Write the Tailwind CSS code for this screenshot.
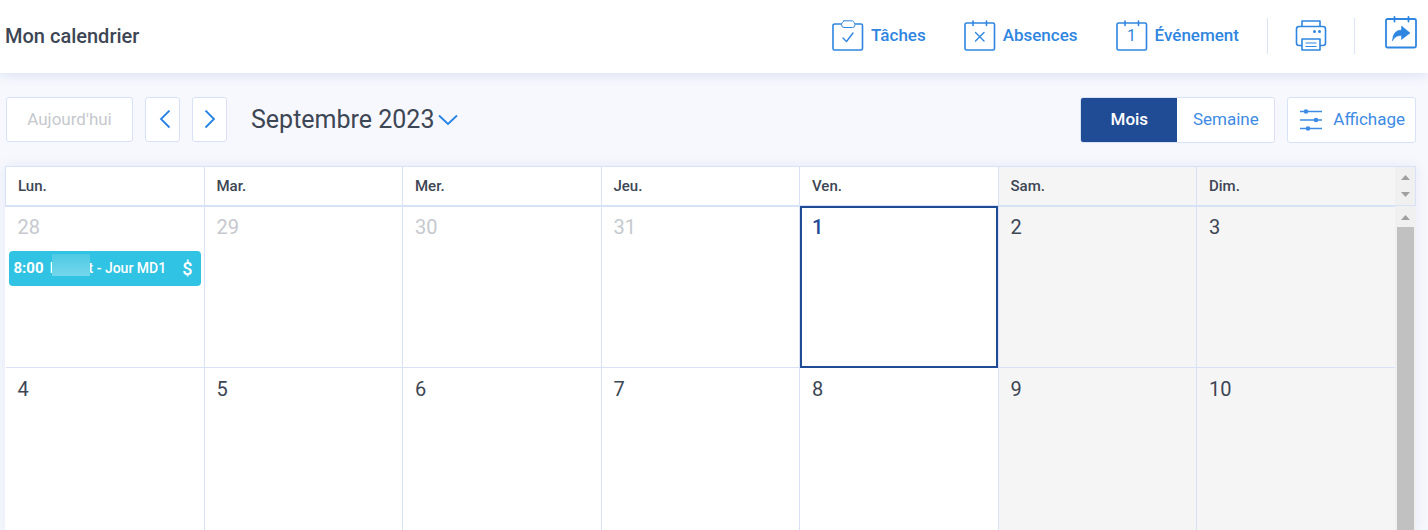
<!DOCTYPE html>
<html lang="fr">
<head>
  <meta charset="UTF-8" />
  <meta name="viewport" content="width=device-width, initial-scale=1.0" />
  <title>Mon calendrier</title>
  <script src="https://cdn.jsdelivr.net/npm/@tailwindcss/browser@4"></script>
</head>
<body class="h-screen overflow-hidden flex flex-col bg-[#f7f8fd] font-['Roboto',sans-serif] text-[#3d4654]">

  <!-- Top bar -->
  <header class="flex items-center justify-between h-[73px] shrink-0 pl-[5px] pr-[11px] pb-[2px] bg-white shadow-[0_2px_12px_#d9e0f3]">
    <h1 class="text-[20px] font-medium">Mon calendrier</h1>
    <div class="flex items-center text-[17px] font-medium text-[#2f86e0]">
      <button class="flex items-center gap-[7px] mr-[38px]">
        <svg class="w-8 h-8" viewBox="0 0 32 32" fill="none" stroke="currentColor" stroke-width="1.6" stroke-linecap="round" stroke-linejoin="round">
          <path d="M9 4H3Q1 4 1 5.500V28.500Q1 30 2.500 30H29Q30.500 30 30.500 28.500V5.500Q30.500 4 29 4H23.500" />
          <path d="M12 0.800H20.500Q23 2.500 23 4.500Q23 7.500 20.500 7.500H12Q9.500 7.500 9.500 4.500Q9.500 2.500 12 0.800Z" stroke-width="1" />
          <path d="M11 18L14.500 21.500L21 13" stroke-width="1.400" />
        </svg>
        Tâches
      </button>
      <button class="flex items-center gap-[7px] mr-[38px]">
        <svg class="w-8 h-8" viewBox="0 0 32 32" fill="none" stroke="currentColor" stroke-width="1.6" stroke-linecap="round" stroke-linejoin="round">
          <rect x="1" y="3" width="29.500" height="27" rx="1.500" />
          <path d="M9 1V5.500M22.500 1V5.500" />
          <path d="M11.500 12.500L20 21M20 12.500L11.500 21" stroke-width="1.400" />
        </svg>
        Absences
      </button>
      <button class="flex items-center gap-[7px] mr-[28px]">
        <svg class="w-8 h-8" viewBox="0 0 32 32" fill="none" stroke="currentColor" stroke-width="1.6" stroke-linecap="round" stroke-linejoin="round">
          <rect x="1" y="3" width="29.500" height="27" rx="1.500" />
          <path d="M9 1V5.500M22.500 1V5.500" />
          <text x="15.500" y="21" text-anchor="middle" font-size="16" font-weight="400" fill="currentColor" stroke="none">1</text>
        </svg>
        Événement
      </button>
      <span class="w-px h-9 bg-[#dbe4f6]"></span>
      <button class="mx-[27px]" aria-label="Imprimer">
        <svg class="w-8 h-8" viewBox="0 0 32 32" fill="none" stroke="currentColor" stroke-width="1.600" stroke-linejoin="round">
          <path d="M7 6.500V1H25V6.500" />
          <path d="M7 25.500H4Q1.500 25.500 1.500 23V9Q1.500 6.500 4 6.500H28Q30.500 6.500 30.500 9V23Q30.500 25.500 28 25.500H25" />
          <path d="M7 19H25V30H7Z" />
          <path d="M10.500 23H21.500M10.500 26.500H21.500" stroke-width="1" />
          <circle cx="19.500" cy="11.500" r="1.500" fill="currentColor" stroke="none" />
          <circle cx="24.500" cy="11.500" r="1.500" fill="currentColor" stroke="none" />
        </svg>
      </button>
      <span class="w-px h-9 bg-[#dbe4f6]"></span>
      <button class="ml-[30px] pb-[6px]" aria-label="Partager">
        <svg class="w-8 h-[34px]" viewBox="0 0 32 34" fill="none" stroke="currentColor" stroke-width="1.800" stroke-linecap="round" stroke-linejoin="round">
          <rect x="1" y="3" width="30" height="28.500" rx="1.500" />
          <path d="M9.500 1V5.500M23.500 1V5.500" />
          <path d="M7.500 24.500Q8 14 16.500 14V10L25 17L16.500 23.500V19.500Q10.500 19 7.500 24.500Z" fill="currentColor" stroke-width="0.600" />
        </svg>
      </button>
    </div>
  </header>

  <!-- Period navigation and view switch -->
  <div class="flex items-start justify-between shrink-0 pt-6 pb-[23px] pl-[6px] pr-3">
    <div class="flex items-center">
      <button class="w-[127px] h-[45px] rounded-[3px] border border-[#d8e2f6] bg-white text-[17px] text-[#c6c9ce]" disabled>Aujourd'hui</button>
      <button class="flex items-center justify-center w-[35px] h-[45px] ml-3 rounded-[3px] border border-[#d8e2f6] bg-white text-[#2583e4]" aria-label="Mois précédent">
        <svg class="w-3 h-5 ml-1" viewBox="0 0 12 20" fill="none" stroke="currentColor" stroke-width="1.800"><path d="M10.500 0.500L2 9L10.500 17.500" /></svg>
      </button>
      <button class="flex items-center justify-center w-[35px] h-[45px] ml-3 rounded-[3px] border border-[#d8e2f6] bg-white text-[#2583e4]" aria-label="Mois suivant">
        <svg class="w-3 h-5" viewBox="0 0 12 20" fill="none" stroke="currentColor" stroke-width="1.800"><path d="M1.500 0.500L10 9L1.500 17.500" /></svg>
      </button>
      <button class="flex items-center gap-1 ml-6 text-[25px]">
        Septembre 2023
        <svg class="w-5 h-3 text-[#2583e4]" viewBox="0 0 20 12" fill="none" stroke="currentColor" stroke-width="1.800"><path d="M1 1.500L10 10L19 1.500" /></svg>
      </button>
    </div>
    <div class="flex items-center gap-3 text-[17px] text-[#3d8be4]">
      <div class="flex h-[46px] rounded-[3px] border border-[#d8e2f6] bg-white overflow-hidden">
        <button class="w-24 bg-[#204b95] font-medium text-white">Mois</button>
        <button class="w-[97px]">Semaine</button>
      </div>
      <button class="flex items-center gap-[10px] h-[46px] pl-[11px] pr-[10px] rounded-[3px] border border-[#d8e2f6] bg-white">
        <svg class="w-6 h-6" viewBox="0 0 24 24" fill="none" stroke="currentColor" stroke-width="1.600">
          <path d="M1 3.500H23M1 12H23M1 20.500H23" />
          <g fill="currentColor" stroke="none">
            <circle cx="7" cy="3.500" r="2.300" />
            <circle cx="17" cy="12" r="2.300" />
            <circle cx="9" cy="20.500" r="2.300" />
          </g>
        </svg>
        Affichage
      </button>
    </div>
  </div>

  <!-- Month grid -->
  <main class="flex items-start ml-[5px] mr-3 bg-white shadow-[0_0_12px_#e3e9f5]">
    <table class="flex-1 table-fixed border-collapse w-full">
      <thead>
        <tr class="h-[39px] text-left text-[15px]">
          <th class="border border-b-2 border-[#d8e2f6] pl-3 font-medium">Lun.</th>
          <th class="border border-b-2 border-[#d8e2f6] pl-3 font-medium">Mar.</th>
          <th class="border border-b-2 border-[#d8e2f6] pl-3 font-medium">Mer.</th>
          <th class="border border-b-2 border-[#d8e2f6] pl-3 font-medium">Jeu.</th>
          <th class="border border-b-2 border-[#d8e2f6] pl-3 font-medium">Ven.</th>
          <th class="border border-b-2 border-[#d8e2f6] pl-3 font-medium bg-[#f5f5f5]">Sam.</th>
          <th class="border border-b-2 border-r-0 border-[#d8e2f6] pl-3 font-medium bg-[#f5f5f5]">Dim.</th>
        </tr>
      </thead>
      <tbody class="text-[20px] align-top">
        <tr class="h-[162px]">
          <td class="border border-l-0 border-[#d8e2f6] pt-[5px] px-[3px] text-[#c6c9ce]">
            <div class="pl-[9px] leading-[30px]">28</div>
            <div class="flex items-center h-[35px] mt-[9px] px-[5px] rounded-[4px] bg-[#30c3e3] text-[14px] font-medium text-white whitespace-nowrap">
              <span class="font-bold mr-[6px] text-[15px]">8:00</span>
              <span>I</span>
              <span class="w-[38px] h-[22px] -ml-[2px] -mr-px mb-[6px] bg-linear-to-b from-[#4dc9e5] to-[#74d7eb] z-10"></span>
              <span>t - Jour MD1</span>
              <span class="ml-auto mr-[3px] text-[18px]">$</span>
            </div>
          </td>
          <td class="border border-[#d8e2f6] pt-[5px] pl-3 leading-[30px] text-[#c6c9ce]">29</td>
          <td class="border border-[#d8e2f6] pt-[5px] pl-3 leading-[30px] text-[#c6c9ce]">30</td>
          <td class="border border-[#d8e2f6] pt-[5px] pl-3 leading-[30px] text-[#c6c9ce]">31</td>
          <td class="border border-[#d8e2f6] pt-[5px] pl-3 leading-[30px] font-medium text-[#204b95] outline-2 -outline-offset-2 outline-[#204b95]">1</td>
          <td class="border border-[#d8e2f6] pt-[5px] pl-3 leading-[30px] bg-[#f5f5f5]">2</td>
          <td class="border border-r-0 border-[#d8e2f6] pt-[5px] pl-3 leading-[30px] bg-[#f5f5f5]">3</td>
        </tr>
        <tr class="h-[163px]">
          <td class="border border-l-0 border-b-0 border-[#d8e2f6] pt-[6px] pl-3 leading-[30px]">4</td>
          <td class="border border-b-0 border-[#d8e2f6] pt-[6px] pl-3 leading-[30px]">5</td>
          <td class="border border-b-0 border-[#d8e2f6] pt-[6px] pl-3 leading-[30px]">6</td>
          <td class="border border-b-0 border-[#d8e2f6] pt-[6px] pl-3 leading-[30px]">7</td>
          <td class="border border-b-0 border-[#d8e2f6] pt-[6px] pl-3 leading-[30px]">8</td>
          <td class="border border-b-0 border-[#d8e2f6] pt-[6px] pl-3 leading-[30px] bg-[#f5f5f5]">9</td>
          <td class="border border-b-0 border-r-0 border-[#d8e2f6] pt-[6px] pl-3 leading-[30px] bg-[#f5f5f5]">10</td>
        </tr>
      </tbody>
    </table>
    <!-- Scroll bars of the heading row and of the grid -->
    <div class="flex flex-col self-stretch shrink-0 w-[21px] bg-[#f0f0f0] text-[#a0a0a0]">
      <div class="flex flex-col items-center justify-between h-10 py-[8px] border border-l-0 border-[#d8e2f6]">
        <svg class="w-[9px] h-[5px]" viewBox="0 0 9 5" fill="currentColor"><path d="M0 5L4.500 0L9 5Z" /></svg>
        <svg class="w-[9px] h-[5px]" viewBox="0 0 9 5" fill="currentColor"><path d="M0 0L4.500 5L9 0Z" /></svg>
      </div>
      <div class="flex justify-center pt-[9px] pb-[7px]">
        <svg class="w-[9px] h-[5px]" viewBox="0 0 9 5" fill="currentColor"><path d="M0 5L4.500 0L9 5Z" /></svg>
      </div>
      <div class="grow ml-[2px] mr-[2px] bg-[#c1c1c1]"></div>
    </div>
  </main>
</body>
</html>
